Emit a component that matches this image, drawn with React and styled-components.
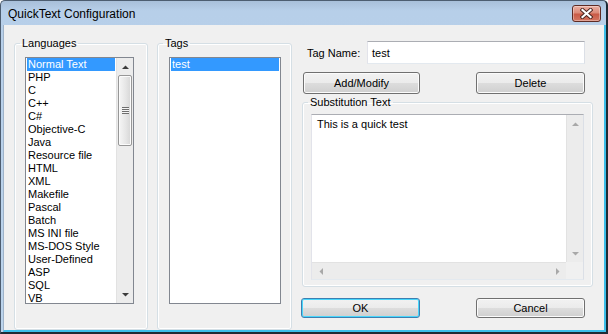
import React from "react";
import styled, { createGlobalStyle } from "styled-components";

const GlobalStyle = createGlobalStyle`
  * {
    box-sizing: border-box;
  }
  html, body {
    margin: 0;
    padding: 0;
    background: #ffffff;
  }
  body {
    font-family: "Liberation Sans", Arial, sans-serif;
    font-size: 11px;
    color: #000000;
  }
`;

const Frame = styled.div`
  width: 608px;
  height: 334px;
  display: flex;
  flex-direction: column;
  background: linear-gradient(#a8bfd9, #b7cfe9 10px, #bcd4ec);
  border-top: 1px solid #4d5d70;
  border-left: 1px solid #4d5d70;
  border-right: 2px solid #1f2a35;
  border-bottom: 2px solid #1f2a35;
  border-top-left-radius: 5px;
  border-top-right-radius: 5px;
`;

const TitleBar = styled.div`
  height: 24px;
  flex: none;
  display: flex;
  align-items: center;
  justify-content: space-between;
  padding: 0 5px 0 7px;
`;

const Title = styled.span`
  font-size: 12px;
  line-height: 14px;
  color: #000000;
  margin-top: 1px;
`;

const CloseButton = styled.div`
  width: 29px;
  height: 17px;
  margin-top: 1px;
  border: 1px solid #5e2b24;
  border-radius: 3px;
  background: linear-gradient(#eab0a3, #dc8a78 45%, #c95a46 55%, #d47662);
  box-shadow: inset 0 0 0 1px rgba(255, 255, 255, 0.35);
  display: flex;
  align-items: center;
  justify-content: center;
`;

const Client = styled.div`
  flex: 1;
  display: flex;
  gap: 9px;
  margin-left: 2px;
  padding: 12px 0 0 10px;
  background: #f0f0f0;
  border-left: 1px solid #9fb3c9;
  border-right: 2px solid #3bbde9;
  border-bottom: 2px solid #3bbde9;
`;

const GroupBox = styled.fieldset`
  margin: ${(p) => p.$margin || "0"};
  min-width: 0;
  width: ${(p) => p.$width}px;
  padding: ${(p) => p.$top}px ${(p) => p.$right}px ${(p) => p.$bottom}px
    ${(p) => p.$left}px;
  border: 1px solid #d5dfe5;
  border-radius: 3px;
  box-shadow: inset 0 0 0 1px #ffffff;
  flex: none;

  & > legend {
    margin-left: ${(p) => 5 - p.$left}px;
  }
`;

const Legend = styled.legend`
  padding: 0 2px;
  font-size: 11px;
  line-height: 13px;
  color: #000000;
`;

const ListBox = styled.div`
  display: flex;
  width: ${(p) => p.$width}px;
  height: 247px;
  border: 1px solid #828790;
  background: #ffffff;
  overflow: hidden;
`;

const Items = styled.ul`
  flex: 1;
  margin: 0;
  padding: 0 1px;
  list-style: none;
  overflow: hidden;
`;

const Item = styled.li`
  height: 13px;
  line-height: 13px;
  padding-left: 1px;
  white-space: nowrap;
  background: ${(p) => (p.$selected ? "#3399ff" : "transparent")};
  color: ${(p) => (p.$selected ? "#ffffff" : "#000000")};
`;

const VScroll = styled.div`
  width: 17px;
  flex: none;
  display: flex;
  flex-direction: column;
  background: #ececec;
  border-left: 1px solid #e2e2e2;
`;

const HScroll = styled.div`
  height: 17px;
  flex: 1;
  display: flex;
  background: #ececec;
  border-top: 1px solid #e2e2e2;
`;

const ArrowBox = styled.div`
  width: ${(p) => (p.$horizontal ? "17px" : "auto")};
  height: ${(p) => (p.$horizontal ? "auto" : "17px")};
  flex: none;
  display: flex;
  align-items: center;
  justify-content: center;
`;

const Track = styled.div`
  flex: 1;
  padding: 0 1px;
`;

const Thumb = styled.div`
  height: 71px;
  border: 1px solid #979797;
  border-radius: 2px;
  background: linear-gradient(to right, #f6f6f6, #e6e6e6 55%, #d6d6d6);
  box-shadow: inset 0 0 0 1px #fbfbfb;
  display: flex;
  align-items: center;
  justify-content: center;
`;

const Grip = styled.div`
  width: 7px;
  height: 7px;
  background: repeating-linear-gradient(#6e6e6e 0 1px, #f4f4f4 1px 2px);
`;

const RightColumn = styled.div`
  width: 292px;
  flex: none;
  display: flex;
  flex-direction: column;
`;

const TagRow = styled.div`
  display: flex;
  align-items: center;
  height: 23px;
  margin-top: 4px;
  padding: 0 8px 0 6px;
`;

const Label = styled.span`
  width: 60px;
  flex: none;
`;

const EditBox = styled.div`
  flex: 1;
  height: 23px;
  display: flex;
  align-items: center;
  padding: 0 4px;
  background: #ffffff;
  border: 1px solid;
  border-color: #abadb3 #dbdfe6 #e3e9ef #e2e3ea;
`;

const ButtonRow = styled.div`
  display: flex;
  justify-content: space-between;
  align-items: flex-start;
  margin-top: ${(p) => p.$top}px;
  padding: 0 8px 0 ${(p) => p.$left}px;
`;

const Button = styled.button`
  width: ${(p) => p.$width}px;
  height: ${(p) => p.$height}px;
  padding: 0;
  font-family: "Liberation Sans", Arial, sans-serif;
  font-size: 11px;
  color: #000000;
  border: 1px solid ${(p) => (p.$default ? "#3c7fb1" : "#707070")};
  border-radius: 3px;
  background: linear-gradient(#f2f2f2, #ebebeb 50%, #dddddd 50%, #cfcfcf);
  box-shadow: inset 0 0 0 1px ${(p) => (p.$default ? "#48d6fb" : "#fbfbfb")};
`;

const TextArea = styled.div`
  height: 166px;
  margin-top: 5px;
  display: flex;
  flex-direction: column;
  background: #ffffff;
  border: 1px solid;
  border-color: #abadb3 #dbdfe6 #e3e9ef #e2e3ea;
`;

const TextBody = styled.div`
  flex: 1;
  display: flex;
  min-height: 0;
`;

const TextContent = styled.div`
  flex: 1;
  padding: 2px 5px;
  line-height: 14px;
`;

const BottomBar = styled.div`
  height: 17px;
  flex: none;
  display: flex;
`;

const Corner = styled.div`
  width: 17px;
  flex: none;
  background: #f0f0f0;
`;

const ArrowIcon = ({ dir, color = "#3c3c3c" }) => {
  const shapes = {
    up: { w: 7, h: 4, pts: "0,4 3.5,0.5 7,4" },
    down: { w: 7, h: 4, pts: "0,0 7,0 3.5,3.5" },
    left: { w: 4, h: 7, pts: "4,0 4,7 0.5,3.5" },
    right: { w: 4, h: 7, pts: "0,0 3.5,3.5 0,7" },
  };
  const s = shapes[dir];
  return (
    <svg width={s.w} height={s.h} viewBox={`0 0 ${s.w} ${s.h}`}>
      <polygon points={s.pts} fill={color} />
    </svg>
  );
};

const CloseIcon = () => (
  <svg width="13" height="11" viewBox="0 0 13 11">
    <path d="M2.5 2 L10.5 9 M10.5 2 L2.5 9" stroke="#4a2520" strokeWidth="4" strokeLinecap="square" />
    <path d="M2.5 2 L10.5 9 M10.5 2 L2.5 9" stroke="#ffffff" strokeWidth="2.2" strokeLinecap="square" />
  </svg>
);

const languages = [
  "Normal Text",
  "PHP",
  "C",
  "C++",
  "C#",
  "Objective-C",
  "Java",
  "Resource file",
  "HTML",
  "XML",
  "Makefile",
  "Pascal",
  "Batch",
  "MS INI file",
  "MS-DOS Style",
  "User-Defined",
  "ASP",
  "SQL",
  "VB",
];

const App = () => {
  return (
    <>
      <GlobalStyle />
      <Frame>
        <TitleBar>
          <Title>QuickText Configuration</Title>
          <CloseButton>
            <CloseIcon />
          </CloseButton>
        </TitleBar>
        <Client>
          <GroupBox $width={134} $top={7} $right={13} $bottom={13} $left={10}>
            <Legend>Languages</Legend>
            <ListBox $width={109}>
              <Items>
                {languages.map((name, i) => (
                  <Item key={name} $selected={i === 0}>
                    {name}
                  </Item>
                ))}
              </Items>
              <VScroll>
                <ArrowBox>
                  <ArrowIcon dir="up" />
                </ArrowBox>
                <Track>
                  <Thumb>
                    <Grip />
                  </Thumb>
                </Track>
                <ArrowBox>
                  <ArrowIcon dir="down" />
                </ArrowBox>
              </VScroll>
            </ListBox>
          </GroupBox>

          <GroupBox $width={135} $top={7} $right={10} $bottom={13} $left={11}>
            <Legend>Tags</Legend>
            <ListBox $width={112}>
              <Items>
                <Item $selected>test</Item>
              </Items>
            </ListBox>
          </GroupBox>

          <RightColumn>
            <TagRow>
              <Label>Tag Name:</Label>
              <EditBox>test</EditBox>
            </TagRow>
            <ButtonRow $top={8} $left={2}>
              <Button $width={117} $height={22}>
                Add/Modify
              </Button>
              <Button $width={109} $height={22}>
                Delete
              </Button>
            </ButtonRow>
            <GroupBox
              $width={291}
              $margin="2px 0 0 1px"
              $top={0}
              $right={8}
              $bottom={6}
              $left={8}
            >
              <Legend>Substitution Text</Legend>
              <TextArea>
                <TextBody>
                  <TextContent>This is a quick test</TextContent>
                  <VScroll>
                    <ArrowBox>
                      <ArrowIcon dir="up" color="#a8a8a8" />
                    </ArrowBox>
                    <Track />
                    <ArrowBox>
                      <ArrowIcon dir="down" color="#a8a8a8" />
                    </ArrowBox>
                  </VScroll>
                </TextBody>
                <BottomBar>
                  <HScroll>
                    <ArrowBox $horizontal>
                      <ArrowIcon dir="left" color="#a8a8a8" />
                    </ArrowBox>
                    <Track />
                    <ArrowBox $horizontal>
                      <ArrowIcon dir="right" color="#a8a8a8" />
                    </ArrowBox>
                  </HScroll>
                  <Corner />
                </BottomBar>
              </TextArea>
            </GroupBox>
            <ButtonRow $top={11} $left={0}>
              <Button $width={119} $height={20} $default>
                OK
              </Button>
              <Button $width={109} $height={20}>
                Cancel
              </Button>
            </ButtonRow>
          </RightColumn>
        </Client>
      </Frame>
    </>
  );
};

export default App;
